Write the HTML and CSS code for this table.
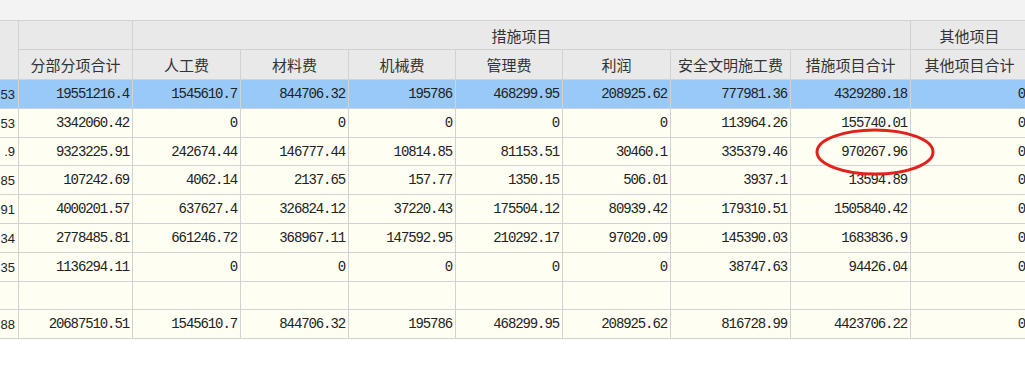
FILE: index.html
```html
<!DOCTYPE html>
<html lang="zh-CN">
<head>
<meta charset="utf-8">
<title>费用汇总</title>
<link rel="stylesheet" href="styles.css">
</head>
<body>
<div class="toolbar"></div>
<div class="sheet">
  <div class="grid">
    <div class="hd hd-corner"></div>
    <div class="hd"></div>
    <div class="hd hd-group">措施项目</div>
    <div class="hd">其他项目</div>

    <div class="hd">分部分项合计</div>
    <div class="hd">人工费</div>
    <div class="hd">材料费</div>
    <div class="hd">机械费</div>
    <div class="hd">管理费</div>
    <div class="hd">利润</div>
    <div class="hd">安全文明施工费</div>
    <div class="hd">措施项目合计</div>
    <div class="hd">其他项目合计</div>

    <div class="c k sel">53</div><div class="c sel">19551216.4</div><div class="c sel">1545610.7</div><div class="c sel">844706.32</div><div class="c sel">195786</div><div class="c sel">468299.95</div><div class="c sel">208925.62</div><div class="c sel">777981.36</div><div class="c sel">4329280.18</div><div class="c sel">0</div>

    <div class="c k">53</div><div class="c">3342060.42</div><div class="c">0</div><div class="c">0</div><div class="c">0</div><div class="c">0</div><div class="c">0</div><div class="c">113964.26</div><div class="c">155740.01</div><div class="c">0</div>

    <div class="c k">.9</div><div class="c">9323225.91</div><div class="c">242674.44</div><div class="c">146777.44</div><div class="c">10814.85</div><div class="c">81153.51</div><div class="c">30460.1</div><div class="c">335379.46</div><div class="c">970267.96</div><div class="c">0</div>

    <div class="c k">85</div><div class="c">107242.69</div><div class="c">4062.14</div><div class="c">2137.65</div><div class="c">157.77</div><div class="c">1350.15</div><div class="c">506.01</div><div class="c">3937.1</div><div class="c">13594.89</div><div class="c">0</div>

    <div class="c k">91</div><div class="c">4000201.57</div><div class="c">637627.4</div><div class="c">326824.12</div><div class="c">37220.43</div><div class="c">175504.12</div><div class="c">80939.42</div><div class="c">179310.51</div><div class="c">1505840.42</div><div class="c">0</div>

    <div class="c k">34</div><div class="c">2778485.81</div><div class="c">661246.72</div><div class="c">368967.11</div><div class="c">147592.95</div><div class="c">210292.17</div><div class="c">97020.09</div><div class="c">145390.03</div><div class="c">1683836.9</div><div class="c">0</div>

    <div class="c k">35</div><div class="c">1136294.11</div><div class="c">0</div><div class="c">0</div><div class="c">0</div><div class="c">0</div><div class="c">0</div><div class="c">38747.63</div><div class="c">94426.04</div><div class="c">0</div>

    <div class="c k"></div><div class="c"></div><div class="c"></div><div class="c"></div><div class="c"></div><div class="c"></div><div class="c"></div><div class="c"></div><div class="c"></div><div class="c"></div>

    <div class="c k">88</div><div class="c">20687510.51</div><div class="c">1545610.7</div><div class="c">844706.32</div><div class="c">195786</div><div class="c">468299.95</div><div class="c">208925.62</div><div class="c">816728.99</div><div class="c">4423706.22</div><div class="c">0</div>
  </div>
  <svg class="mark" width="130" height="56" viewBox="0 0 130 56" aria-hidden="true">
    <ellipse cx="65" cy="28" rx="58" ry="22" fill="none" stroke="#e3211c" stroke-width="3"/>
  </svg>
</div>
</body>
</html>
```

FILE: styles.css
```css
html, body {
  margin: 0;
  padding: 0;
  background: #ffffff;
  overflow: hidden;
}

.toolbar {
  height: 20px;
  background: #f3f3f3;
}

.sheet {
  position: relative;
  width: 1025px;
  overflow: hidden;
}

.grid {
  display: grid;
  width: 1028px;
  grid-template-columns: 18px 113px 107px 107px 106px 106px 107px 119px 119px 117px;
  grid-template-rows: 28px 29px 28px 28px 27px 28px 28px 28px 28px 27px 28px;
  gap: 1px;
  padding: 1px 0;
  background: #d2d2d2;
}

.hd {
  background: #e9e9e9;
  display: flex;
  align-items: center;
  justify-content: center;
  font-family: "Noto Sans CJK SC", "Noto Sans", sans-serif;
  font-size: 15px;
  color: #333333;
  white-space: nowrap;
  overflow: hidden;
}

.hd-corner {
  grid-row: span 2;
}

.hd-group {
  grid-column: span 7;
}

.c {
  background: #fefef2;
  display: flex;
  align-items: center;
  justify-content: flex-end;
  padding-right: 3px;
  font-family: "Liberation Mono", "DejaVu Sans Mono", monospace;
  font-size: 14px;
  letter-spacing: -1.1px;
  color: #222222;
  white-space: nowrap;
  overflow: hidden;
}

.c.k {
  padding-right: 3px;
  font-family: "Liberation Sans", Arial, sans-serif;
  font-size: 13px;
  letter-spacing: 0;
}

.c.sel {
  background: #99c9f7;
}

.mark {
  position: absolute;
  left: 810px;
  top: 104px;
}
```
